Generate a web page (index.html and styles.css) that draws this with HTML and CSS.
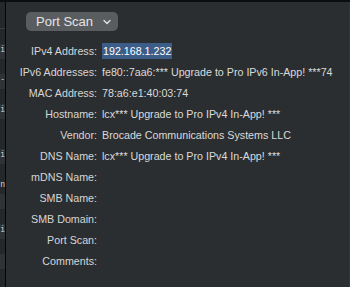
FILE: index.html
```html
<!DOCTYPE html>
<html>
<head>
<meta charset="utf-8">
<link rel="stylesheet" href="styles.css">
</head>
<body>
<div class="topline"></div>
<div class="window">
  <div class="sidebar">
    <div class="srow head"></div>
    <div class="srow"></div>
    <div class="srow alt">i</div>
    <div class="srow"></div>
    <div class="srow alt">-</div>
    <div class="srow"></div>
    <div class="srow alt">i</div>
    <div class="srow"></div>
    <div class="srow"></div>
    <div class="srow alt">i</div>
    <div class="srow"></div>
    <div class="srow">n</div>
    <div class="srow alt"></div>
    <div class="srow"></div>
    <div class="srow alt">i</div>
    <div class="srow"></div>
    <div class="srow alt"></div>
    <div class="srow"></div>
  </div>
  <div class="panel">
    <div class="toolbar">
      <button class="popup">Port Scan
        <svg class="chev" width="8" height="6" viewBox="0 0 8 6"><path d="M1 1.5 L4 4.5 L7 1.5" fill="none" stroke="#e2e2e2" stroke-width="1.4" stroke-linecap="round" stroke-linejoin="round"/></svg>
      </button>
    </div>
    <div class="details">
      <div class="label">IPv4 Address:</div><div class="value"><span class="sel">192.168.1.232</span></div>
      <div class="label">IPv6 Addresses:</div><div class="value">fe80::7aa6:*** Upgrade to Pro IPv6 In-App! ***74</div>
      <div class="label">MAC Address:</div><div class="value">78:a6:e1:40:03:74</div>
      <div class="label">Hostname:</div><div class="value">lcx*** Upgrade to Pro IPv4 In-App! ***</div>
      <div class="label">Vendor:</div><div class="value">Brocade Communications Systems LLC</div>
      <div class="label">DNS Name:</div><div class="value">lcx*** Upgrade to Pro IPv4 In-App! ***</div>
      <div class="label">mDNS Name:</div><div class="value"></div>
      <div class="label">SMB Name:</div><div class="value"></div>
      <div class="label">SMB Domain:</div><div class="value"></div>
      <div class="label">Port Scan:</div><div class="value"></div>
      <div class="label">Comments:</div><div class="value"></div>
    </div>
  </div>
</div>
</body>
</html>
```

FILE: styles.css
```css
html, body {
  margin: 0;
  padding: 0;
  background: #2b2e30;
  width: 350px;
  height: 287px;
  overflow: hidden;
}
body {
  font-family: "Liberation Sans", Arial, sans-serif;
}
.topline {
  height: 2px;
  background: #0c0d0e;
}
.window {
  display: flex;
  height: 285px;
}
.sidebar {
  width: 5px;
  border-right: 1px solid #050505;
  background: #25282a;
  overflow: hidden;
  flex: none;
}
.srow {
  height: 15px;
  font-family: "DejaVu Sans Mono", monospace;
  font-size: 8px;
  line-height: 12px;
  color: #d0d0d0;
  text-align: right;
  white-space: nowrap;
}
.srow.head {
  height: 26px;
  border-bottom: 1px solid #3a3d40;
}
.srow.alt {
  background: #303335;
}
.panel {
  flex: 1;
  border-right: 1px solid #34373a;
}
.toolbar {
  padding: 10px 0 0 20px;
}
.popup {
  display: flex;
  align-items: center;
  height: 19px;
  width: 92px;
  padding: 0 0 0 10px;
  margin: 0;
  border: none;
  border-radius: 5px;
  background: #5a5d5f;
  color: #e4e4e4;
  font-family: "Liberation Sans", Arial, sans-serif;
  font-size: 13px;
  line-height: 19px;
}
.chev {
  margin-left: 10px;
  margin-top: 1px;
}
.details {
  display: grid;
  grid-template-columns: 91px 1fr;
  column-gap: 5px;
  margin-top: 10px;
  font-size: 10.7px;
  color: #d6d6d6;
}
.label, .value {
  height: 21px;
  line-height: 21px;
  white-space: nowrap;
}
.label {
  text-align: right;
}
.value {
  color: #dadada;
}
.sel {
  display: inline-block;
  background: #3d5d89;
  color: #ffffff;
  line-height: 16px;
  padding: 0 1px;
}
```
